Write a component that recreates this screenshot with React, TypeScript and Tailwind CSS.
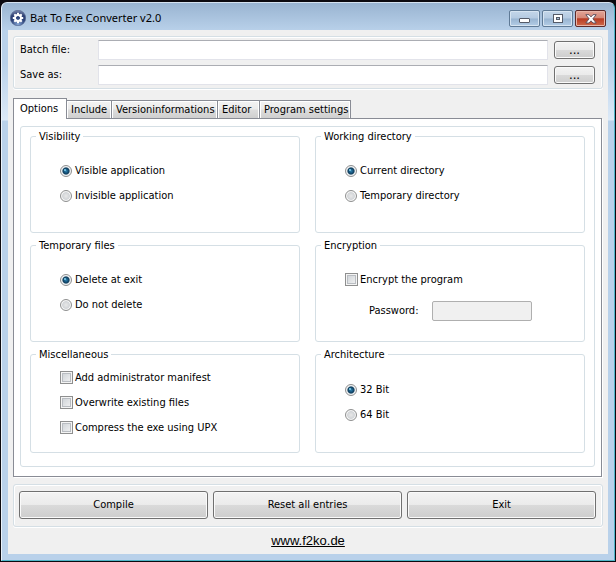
import type { ReactNode } from "react";

const push =
  "rounded-[3px] border border-[#707070] bg-[linear-gradient(#f3f3f3,#ebebeb_48%,#dadada_50%,#cdcdcd)] shadow-[inset_0_0_0_1px_#fafafa]";
const etched =
  "rounded-[3px] border border-[#d5dfe5] shadow-[inset_1px_1px_0_#fff,inset_-1px_0_0_#fff,0_1px_0_#fff]";
const caption =
  "flex h-[17px] w-[31px] items-center justify-center rounded-[2px] border border-[#5f7a96] bg-[linear-gradient(#c4d6e9,#b4cae1_48%,#98b4d1_52%,#b3cde6)] shadow-[inset_0_0_0_1px_#d6e4f1]";

function GearIcon() {
  const teeth = [0, 45, 90, 135, 180, 225, 270, 315];
  return (
    <svg viewBox="0 0 16 16" className="size-4" aria-hidden="true">
      <defs>
        <radialGradient id="ball" cx="50%" cy="95%" r="95%">
          <stop offset="0" stopColor="#86a8d8" />
          <stop offset="0.5" stopColor="#2b4279" />
          <stop offset="0.75" stopColor="#2f4275" />
          <stop offset="1" stopColor="#8390b4" />
        </radialGradient>
      </defs>
      <circle cx="8" cy="8" r="7.7" fill="url(#ball)" stroke="#4b5c86" strokeWidth="0.6" />
      <g fill="#fff">
        {teeth.map((a) => (
          <rect key={a} x="7" y="2.8" width="2" height="3" transform={`rotate(${a} 8 8)`} />
        ))}
      </g>
      <circle cx="8" cy="8" r="3" fill="none" stroke="#fff" strokeWidth="1.8" />
    </svg>
  );
}

function FileRow({ id, label }: { id: string; label: string }) {
  return (
    <div className="flex h-5 items-center">
      <label htmlFor={id} className="w-[78px] shrink-0">
        {label}
      </label>
      <input
        id={id}
        type="text"
        className="h-5 min-w-0 flex-1 border border-[#e2e3ea] border-t-[#abadb3] bg-white px-1 outline-none"
      />
      <button
        type="button"
        aria-label={`Browse ${label}`}
        className={`ml-1.5 flex h-[18px] w-[41px] items-center justify-center text-[13px] ${push}`}
      >
        ...
      </button>
    </div>
  );
}

function Group({ title, children, className = "" }: { title: string; children: ReactNode; className?: string }) {
  return (
    <fieldset className={`min-w-0 rounded-[3px] border border-[#d5dfe5] ${className}`}>
      <legend className="ml-[5px] px-[3px] leading-[15px]">{title}</legend>
      {children}
    </fieldset>
  );
}

function Radio({ name, label, checked }: { name: string; label: string; checked?: boolean }) {
  return (
    <label className="ml-[29px] flex h-[25px] items-center">
      <input
        type="radio"
        name={name}
        defaultChecked={checked}
        className="mr-[3px] size-3 shrink-0 appearance-none rounded-full border border-[#8e8f8f] bg-[radial-gradient(circle_6px_at_5px_5px,#e8e8e8,#d2d5d8_58%,#f4f4f4_70%)] checked:bg-[radial-gradient(circle_1px_at_4px_4px,#8ad8f4,#8ad8f4_60%,transparent),radial-gradient(circle_6px_at_5px_5px,#2f87b4,#155078_35%,#123f5c_52%,#f0f2f4_68%)]"
      />
      {label}
    </label>
  );
}

function Check({ label }: { label: string }) {
  return (
    <label className="ml-[29px] flex h-[25px] items-center">
      <input
        type="checkbox"
        className="mr-0.5 size-[13px] shrink-0 appearance-none border border-[#8e8f8f] bg-linear-to-br from-[#c9ced3] to-[#f6f6f6] shadow-[inset_0_0_0_1px_#f4f4f4,inset_0_0_0_2px_#b9bdc2] checked:bg-[#2b7ea8]"
      />
      {label}
    </label>
  );
}

function Tab({ label, className }: { label: string; className: string }) {
  return (
    <button
      type="button"
      role="tab"
      aria-selected="false"
      className={`-ml-px h-[18px] border border-b-0 border-[#898c95] bg-[linear-gradient(#f3f3f3,#ebebeb_48%,#dddddd_52%,#cfcfcf)] pl-1 text-left whitespace-nowrap shadow-[inset_1px_1px_0_#fff,inset_-1px_0_0_#fff] ${className}`}
    >
      {label}
    </button>
  );
}

export default function App() {
  return (
    <div className="flex min-h-screen flex-col bg-[#0c0a10] px-px pt-0.5 pb-px font-['DejaVu_Sans_Condensed','DejaVu_Sans',sans-serif] text-[11px] leading-[14px] text-black">
      <div className="flex flex-1 flex-col rounded-t-[6px] border border-t-[#d5e2f0] border-r-[#4fb6c8] border-b-[#4fb6c8] border-l-[#eaf2fa] bg-[linear-gradient(#99b4d1,#b9d1ea_28px,#b9d1ea_60px,#dce9f7_117px,#b9d1ea_118px)] px-1.5 pb-1.5">
        <header className="flex h-[27px] items-start">
          <div className="flex flex-1 items-center gap-1 pt-[7px] pl-0.5">
            <GearIcon />
            <h1 className="font-['Noto_Sans',sans-serif] text-[11px] leading-4">Bat To Exe Converter v2.0</h1>
          </div>
          <div className="flex gap-0.5 pt-[7px] pr-0.5">
            <button type="button" aria-label="Minimize" className={caption}>
              <svg viewBox="0 0 12 10" className="h-2.5 w-3">
                <rect x="0.5" y="4.5" width="10" height="4" rx="0.5" fill="#fff" stroke="#555b68" />
              </svg>
            </button>
            <button type="button" aria-label="Maximize" className={caption}>
              <svg viewBox="0 0 12 10" className="h-2.5 w-3">
                <rect x="1.5" y="0.5" width="9" height="8" fill="#fff" stroke="#555b68" />
                <rect x="4.5" y="3.5" width="3" height="2" fill="#a9c0d8" stroke="#555b68" />
              </svg>
            </button>
            <button
              type="button"
              aria-label="Close"
              className="flex h-[17px] w-[31px] items-center justify-center rounded-[2px] border border-[#5c2a2a] bg-[linear-gradient(#e3a598,#d58878_45%,#b83c24_52%,#cf6a4c)] shadow-[inset_0_0_0_1px_#e8b5a8]"
            >
              <svg viewBox="0 0 12 10" className="h-2.5 w-3">
                <path
                  d="M0.8 0.7H4L6 2.9L8 0.7H11.2L7.9 4.8L11.2 9H8L6 6.8L4 9H0.8L4.1 4.8Z"
                  fill="#fff"
                  stroke="#54495a"
                  strokeWidth="0.9"
                />
              </svg>
            </button>
          </div>
        </header>

        <main className="flex flex-1 flex-col bg-[#f0f0f0] px-[5px] pt-1.5">
          <section className={`flex flex-col gap-[5px] py-[3px] pr-[7px] pl-1.5 ${etched}`}>
            <FileRow id="batch" label="Batch file:" />
            <FileRow id="save" label="Save as:" />
          </section>

          <div role="tablist" className="mt-[9px] flex items-end">
            <button
              type="button"
              role="tab"
              aria-selected="true"
              className="z-10 -mb-px h-[21px] w-[54px] border border-b-0 border-[#898c95] bg-white pl-1.5 text-left"
            >
              Options
            </button>
            <Tab label="Include" className="w-[46px]" />
            <Tab label="Versioninformations" className="w-[107px]" />
            <Tab label="Editor" className="w-[43px]" />
            <Tab label="Program settings" className="w-[92px]" />
          </div>

          <section className="mr-px border border-[#898c95] bg-white px-1.5 pt-[7px] pb-[9px] shadow-[1px_1px_0_#fff]">
            <div className="grid grid-cols-2 gap-x-[15px] gap-y-[5px] rounded-[3px] border border-[#d5dfe5] px-[9px] pt-0.5 pb-[13px]">
              <Group title="Visibility" className="h-[104px]">
                <div className="pt-[14px]">
                  <Radio name="visibility" label="Visible application" checked />
                  <Radio name="visibility" label="Invisible application" />
                </div>
              </Group>
              <Group title="Working directory" className="h-[104px]">
                <div className="pt-[14px]">
                  <Radio name="directory" label="Current directory" checked />
                  <Radio name="directory" label="Temporary directory" />
                </div>
              </Group>
              <Group title="Temporary files" className="h-[104px]">
                <div className="pt-[14px]">
                  <Radio name="temporary" label="Delete at exit" checked />
                  <Radio name="temporary" label="Do not delete" />
                </div>
              </Group>
              <Group title="Encryption" className="h-[104px]">
                <div className="pt-[14px]">
                  <Check label="Encrypt the program" />
                  <div className="mt-[9px] ml-[53px] flex h-5 items-center">
                    <label htmlFor="password" className="w-[63px]">
                      Password:
                    </label>
                    <input
                      id="password"
                      type="password"
                      disabled
                      className="h-5 w-[100px] rounded-[2px] border border-[#afafaf] bg-[#f0f0f0]"
                    />
                  </div>
                </div>
              </Group>
              <Group title="Miscellaneous" className="h-[106px]">
                <div className="pt-[3px]">
                  <Check label="Add administrator manifest" />
                  <Check label="Overwrite existing files" />
                  <Check label="Compress the exe using UPX" />
                </div>
              </Group>
              <Group title="Architecture" className="h-[106px]">
                <div className="pt-[15px]">
                  <Radio name="architecture" label="32 Bit" checked />
                  <Radio name="architecture" label="64 Bit" />
                </div>
              </Group>
            </div>
          </section>

          <section className={`mt-[7px] flex gap-[5px] pt-1.5 pr-1.5 pb-[7px] pl-[5px] ${etched}`}>
            <button type="button" className={`h-7 flex-1 ${push}`}>Compile</button>
            <button type="button" className={`h-7 flex-1 ${push}`}>Reset all entries</button>
            <button type="button" className={`h-7 flex-1 ${push}`}>Exit</button>
          </section>

          <footer className="flex flex-1 items-center justify-center py-1">
            <a href="http://www.f2ko.de" className="font-['Liberation_Sans',Arial,sans-serif] text-[13px] leading-[18px] underline">
              www.f2ko.de
            </a>
          </footer>
        </main>
      </div>
    </div>
  );
}
